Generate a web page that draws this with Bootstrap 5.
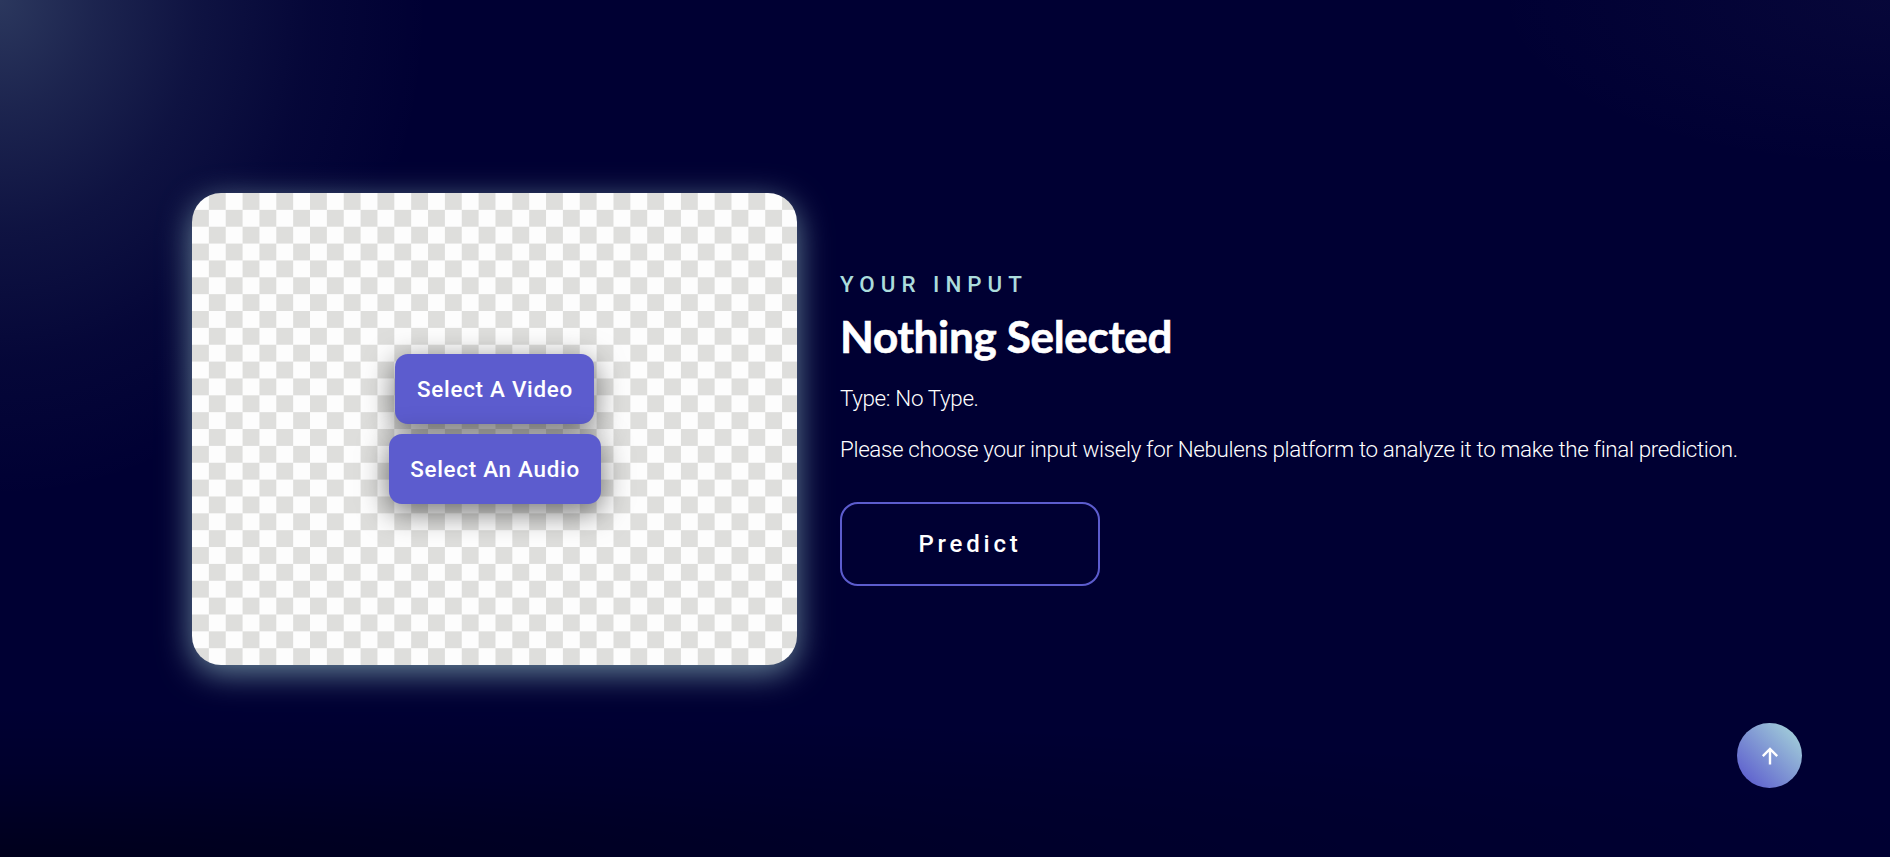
<!DOCTYPE html>
<html lang="en">
<head>
<meta charset="utf-8">
<meta name="viewport" content="width=device-width, initial-scale=1">
<title>Nebulens</title>
<link href="https://cdn.jsdelivr.net/npm/bootstrap@5.3.0/dist/css/bootstrap.min.css" rel="stylesheet">
<style>
  body {
    font-family: Roboto, sans-serif;
    background-color: #000033;
    color: #fff;
    overflow: hidden;
  }
  .page-hero {
    height: 857px;
    padding: 0 140px 0 192px;
    background:
      radial-gradient(ellipse 430px 500px at 0 0, rgba(172,220,220,.25) 0, rgba(172,220,220,.165) 22%, rgba(172,220,220,.085) 46%, rgba(172,220,220,.03) 72%, transparent 100%),
      radial-gradient(ellipse 400px 170px at 100% 0, rgba(172,172,206,.04), transparent),
      radial-gradient(ellipse 2000px 150px at 0 100%, rgba(0,0,0,.45), rgba(0,0,0,.15) 55%, transparent);
  }
  .preview-box {
    width: 605px;
    height: 472px;
    border-radius: 29px;
    background: #fdfdfd conic-gradient(#dededc 25%, #fdfdfd 0 50%, #dededc 0 75%, #fdfdfd 0) 0 0 / 33.72px 33.72px;
    box-shadow: 0 8px 32px rgba(172,220,220,.6);
    gap: 10px;
  }
  .btn-pick {
    --bs-btn-color: #fff;
    --bs-btn-bg: #5c5cce;
    --bs-btn-border-width: 0;
    --bs-btn-border-radius: 13px;
    height: 70px;
    width: 212px;
    padding: 2px 0 0 1px;
    font-size: 22.4px;
    font-weight: 500;
    letter-spacing: .72px;
    box-shadow: 0 8px 30px rgba(0,0,0,.55);
  }
  .btn-pick-video { width: 199px; }
  .info-panel { padding-left: 43px; }
  .eyebrow { font-size: 22.4px; font-weight: 500; letter-spacing: 6px; line-height: 26px; margin-bottom: 12px; color: #acdcdc; }
  .headline { font-family: Lato, sans-serif; font-size: 44px; font-weight: 700; line-height: 54px; letter-spacing: -.3px; margin-bottom: 18px; -webkit-text-stroke: .6px #fff; }
  .copy { font-size: 22.4px; font-weight: 300; line-height: 34px; letter-spacing: -.345px; white-space: nowrap; }
  .copy-gap { margin-bottom: 17px; }
  .copy-last { margin-bottom: 36px; }
  .btn-predict {
    --bs-btn-color: #fff;
    --bs-btn-border-color: #5c5cce;
    --bs-btn-border-width: 2px;
    --bs-btn-border-radius: 18px;
    width: 260px; height: 84px;
    font-size: 24px; font-weight: 500; letter-spacing: 3.8px;
  }
  .to-top {
    right: 88px; bottom: 69px;
    width: 65px; height: 65px;
    background: linear-gradient(45deg, #5c5cce 8%, #a8d8da 98%);
  }
</style>
</head>
<body>
<main class="page-hero d-flex align-items-center">
  <section class="preview-box d-flex flex-column align-items-center justify-content-center flex-shrink-0">
    <button type="button" class="btn btn-pick btn-pick-video">Select A Video</button>
    <button type="button" class="btn btn-pick">Select An Audio</button>
  </section>
  <section class="info-panel">
    <div class="eyebrow">YOUR INPUT</div>
    <h1 class="headline">Nothing Selected</h1>
    <p class="copy copy-gap">Type: No Type.</p>
    <p class="copy copy-last">Please choose your input wisely for Nebulens platform to analyze it to make the final prediction.</p>
    <button type="button" class="btn btn-predict">Predict</button>
  </section>
</main>
<a href="#" class="to-top position-fixed rounded-circle d-flex align-items-center justify-content-center" aria-label="Back to top">
  <svg width="18" height="18" viewBox="0 0 18 18" fill="none" stroke="#fff" stroke-width="2.4"><path d="M9 17.5V2.5M1.8 9.2 9 2l7.2 7.2"/></svg>
</a>
<script src="https://cdn.jsdelivr.net/npm/bootstrap@5.3.0/dist/js/bootstrap.bundle.min.js"></script>
</body>
</html>
